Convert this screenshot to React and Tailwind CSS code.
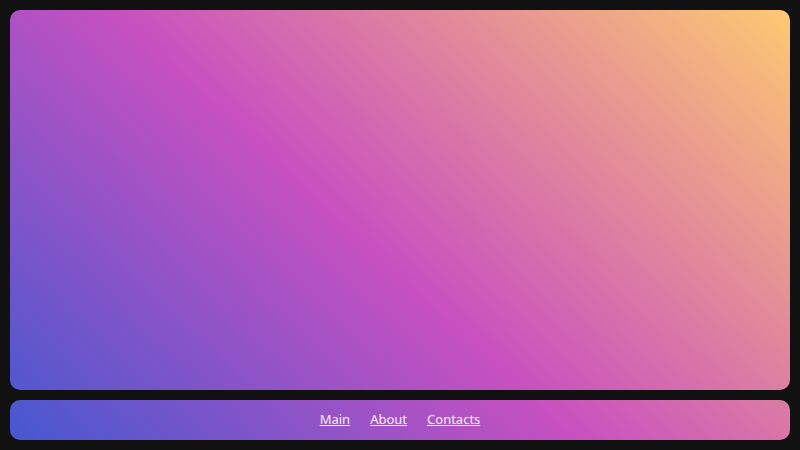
export default function App() {
  return (
    <div className="w-[800px] h-[450px] bg-[#111111] p-[10px] flex flex-col gap-[10px] font-['Liberation_Sans']">
      <div className="flex-1 rounded-[10px] bg-fixed bg-[linear-gradient(43deg,#4158D0_0%,#C850C0_46%,#FFCC70_100%)]" />
      <div className="h-[40px] rounded-[10px] bg-fixed bg-[linear-gradient(43deg,#4158D0_0%,#C850C0_46%,#FFCC70_100%)] flex items-center justify-center gap-[20px] text-[13px] text-white/90">
        <a href="#" className="underline">Main</a>
        <a href="#" className="underline">About</a>
        <a href="#" className="underline">Contacts</a>
      </div>
    </div>
  );
}
